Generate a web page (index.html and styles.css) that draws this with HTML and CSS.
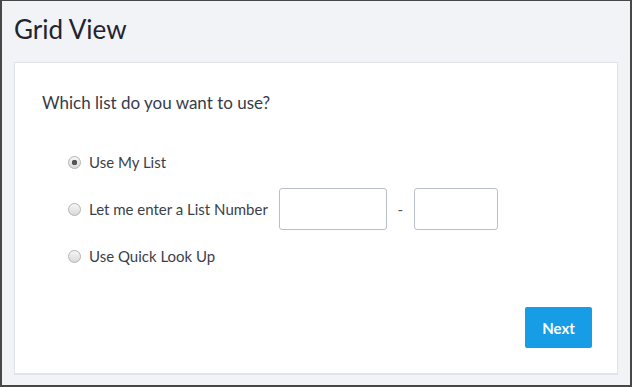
FILE: index.html
```html
<!doctype html>
<html lang="en">
  <head>
    <meta charset="UTF-8" />
    <title>Grid View</title>
    <link rel="stylesheet" href="styles.css">
  </head>
  <body>
    <div class="c-frame">
      <h1 class="c-frame__title">Grid View</h1>

      <section class="c-card">
        <p class="c-card__question">Which list do you want to use?</p>

        <div class="c-options">
          <label class="c-option">
            <input class="c-radio" type="radio" name="list" checked />
            <span>Use My List</span>
          </label>

          <label class="c-option">
            <input class="c-radio" type="radio" name="list" />
            <span>Let me enter a List Number</span>
            <span class="c-option__range">
              <input class="c-input c-input--wide" type="text" />
              <span class="c-option__dash">-</span>
              <input class="c-input c-input--narrow" type="text" />
            </span>
          </label>

          <label class="c-option">
            <input class="c-radio" type="radio" name="list" />
            <span>Use Quick Look Up</span>
          </label>
        </div>

        <div class="c-card__actions">
          <button class="c-button" type="button">Next</button>
        </div>
      </section>
    </div>
  </body>
</html>
```

FILE: styles.css
```css
html,
body {
  margin: 0;
  height: 100%;
}

body {
  font-family: 'Lato', 'Open Sans', sans-serif;
  color: #2d3240;
}

.c-frame {
  box-sizing: border-box;
  height: 387px;
  padding: 12px 12px 10px 12px;
  background-color: #f2f3f7;
  border: 2px solid #474747;
  border-top-width: 1px;
}

.c-frame__title {
  margin: 0 0 17px 0;
  font-size: 26px;
  font-weight: 400;
  line-height: 32px;
  color: #1f2430;
}

.c-card {
  box-sizing: border-box;
  height: 313px;
  padding: 28px 25px 0 27px;
  background-color: #fff;
  border: 1px solid #dfe4ec;
  border-bottom-width: 2px;
}

.c-card__question {
  margin: 0 0 26px 0;
  font-size: 17px;
  line-height: 24px;
  color: #363b48;
}

.c-options {
  display: grid;
  gap: 5px;
  padding-left: 26px;
}

.c-option {
  display: flex;
  align-items: center;
  height: 42px;
  font-size: 15px;
  color: #3a3f4c;
}

.c-radio {
  appearance: none;
  box-sizing: border-box;
  width: 13px;
  height: 13px;
  margin: 0 8px 0 0;
  border: 1px solid #b4b4b4;
  border-radius: 50%;
  background: linear-gradient(#f6f6f6, #d9d9d9);
}

.c-radio:checked {
  background:
    radial-gradient(circle, #555 0, #555 2.5px, transparent 3px),
    linear-gradient(#f6f6f6, #d9d9d9);
}

.c-option__range {
  display: flex;
  align-items: center;
  margin-left: 11px;
}

.c-option__dash {
  width: 27px;
  text-align: center;
  color: #555;
}

.c-input {
  box-sizing: border-box;
  height: 42px;
  border: 1px solid #b8bfcc;
  border-radius: 3px;
  background: #fff;
}

.c-input--wide {
  width: 108px;
}

.c-input--narrow {
  width: 84px;
}

.c-card__actions {
  display: flex;
  justify-content: flex-end;
  padding-top: 30px;
}

.c-button {
  width: 67px;
  height: 41px;
  border: 0;
  border-radius: 2px;
  background-color: #179ce6;
  color: #fff;
  font-family: inherit;
  font-size: 15px;
  font-weight: 700;
}
```
